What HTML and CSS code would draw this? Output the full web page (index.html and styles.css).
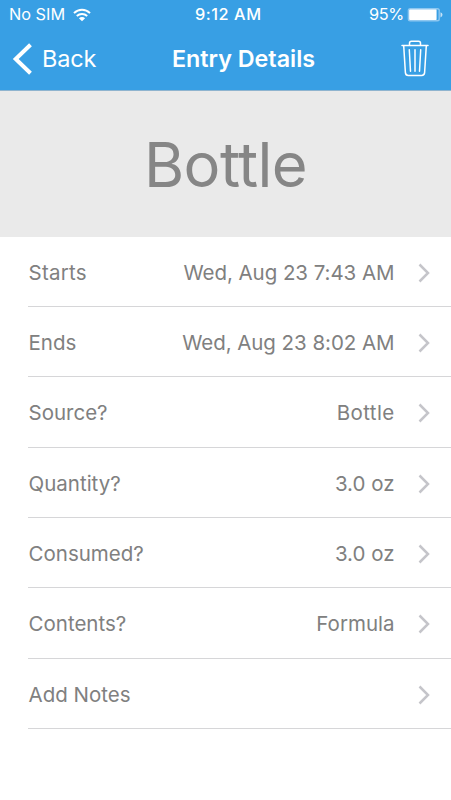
FILE: index.html
```html
<!DOCTYPE html>
<html lang="en">
<head>
<meta charset="utf-8">
<title>Entry Details</title>
<link rel="stylesheet" href="styles.css">
</head>
<body>
<header class="header">
  <div class="status">
    <div class="carrier"><span>No SIM</span>
      <svg width="18" height="14" viewBox="0 0 18 14" fill="none" stroke="#fff" stroke-width="2"><path d="M1 5.1C5.6.7 12.4.7 17 5.1M3.8 8C6.8 5.2 11.2 5.2 14.2 8"/><path d="M5.9 10.2C7.7 8.5 10.3 8.5 12.1 10.2L9 13.3Z" fill="#fff" stroke="none"/></svg>
    </div>
    <span class="clock">9:12 AM</span>
    <div class="power"><span class="percent">95%</span>
      <svg width="36" height="16" viewBox="0 0 36 16"><rect x=".7" y="1" width="32.2" height="13.6" rx="2.5" fill="#8dc7f0"/><rect x="2.2" y="2.5" width="27.5" height="10.6" rx="1" fill="#fff"/><path d="M29.7 2.5h.8q1 0 1 1v8.600q0 1-1 1h-.8z" fill="#389fe4"/><path d="M33.500 5.200q2 .8 2 2.600t-2 2.600z" fill="#c4e2f7"/></svg>
    </div>
  </div>
  <nav class="nav">
    <div class="back">
      <svg width="20" height="32" viewBox="0 0 20 32" fill="none" stroke="#fff" stroke-width="4"><path d="M18.500 1.700L3.700 16L18.500 30.300"/></svg>
      <span>Back</span>
    </div>
    <h1 class="title">Entry Details</h1>
    <svg class="trash" width="28" height="37" viewBox="0 0 28 37" fill="none" stroke="#fff" stroke-width="1.500" stroke-linecap="round" stroke-linejoin="round"><path d="M1 5.500H27M8.500 5.200V3.200Q8.500 1.200 10.500 1.200H17.500Q19.500 1.200 19.500 3.200V5.200M2.700 5.700L4.400 32.600Q4.600 35.400 7.300 35.400H20.700Q23.400 35.400 23.600 32.600L25.300 5.700M8.300 9.700L9.500 31.200M14 9.700V31.200M19.700 9.700L18.500 31.200"/></svg>
  </nav>
</header>
<section class="hero">Bottle</section>
<main class="list">
  <div class="row"><span class="starts">Starts</span><span class="value date">Wed, Aug 23 7:43 AM</span><svg class="chevron" viewBox="0 0 12 20"><path d="M1.500 1.500L10 10L1.500 18.500"/></svg></div>
  <div class="row"><span>Ends</span><span class="value date">Wed, Aug 23 8:02 AM</span><svg class="chevron" viewBox="0 0 12 20"><path d="M1.500 1.500L10 10L1.500 18.500"/></svg></div>
  <div class="row"><span>Source?</span><span class="value source">Bottle</span><svg class="chevron" viewBox="0 0 12 20"><path d="M1.500 1.500L10 10L1.500 18.500"/></svg></div>
  <div class="row"><span>Quantity?</span><span class="value">3.0 oz</span><svg class="chevron" viewBox="0 0 12 20"><path d="M1.500 1.500L10 10L1.500 18.500"/></svg></div>
  <div class="row"><span>Consumed?</span><span class="value">3.0 oz</span><svg class="chevron" viewBox="0 0 12 20"><path d="M1.500 1.500L10 10L1.500 18.500"/></svg></div>
  <div class="row"><span>Contents?</span><span class="value">Formula</span><svg class="chevron" viewBox="0 0 12 20"><path d="M1.500 1.500L10 10L1.500 18.500"/></svg></div>
  <div class="row"><span>Add Notes</span><span class="value"></span><svg class="chevron" viewBox="0 0 12 20"><path d="M1.500 1.500L10 10L1.500 18.500"/></svg></div>
</main>
</body>
</html>
```
FILE: styles.css
```css
* { box-sizing: border-box; }
body { margin: 0; height: 800px; overflow: hidden; background: #fff; color: #808080; font-family: Inter, "Liberation Sans", sans-serif; }
svg { display: block; flex: none; }
span, h1 { white-space: nowrap; }
.header { height: 91px; background: #389fe4; color: #fff; border-bottom: 1px solid #8fb4cf; }
.status { height: 29px; padding: 0 8px 0 9px; display: grid; grid-template-columns: 186px auto 1fr; align-items: center; font-size: 16.300px; line-height: 29px; }
.carrier, .power { display: flex; align-items: center; }
.carrier { gap: 8px; }
.power { justify-content: flex-end; gap: 3px; }
.percent { letter-spacing: -.3px; }
.clock { font-weight: 500; letter-spacing: .55px; }
.nav { height: 61px; padding: 0 22px 2px 12px; display: grid; grid-template-columns: 160px auto 1fr; align-items: center; }
.back { display: flex; align-items: center; gap: 10px; font-size: 23.500px; letter-spacing: -.2px; }
.title { margin: 0; font-size: 23.300px; font-weight: 600; line-height: 30px; }
.trash { justify-self: end; }
.hero { height: 145.600px; padding-top: 1px; background: #eaeaea; display: flex; justify-content: center; align-items: center; color: #868686; font-size: 61.500px; letter-spacing: -.6px; }
.list { padding-left: 28px; }
.row { height: 70.350px; padding: 2.500px 21px 0 .5px; border-bottom: 1.500px solid #d6d6d8; display: flex; align-items: center; font-size: 20.500px; line-height: 28px; }
.starts { letter-spacing: .25px; }
.value { margin-left: auto; }
.date { letter-spacing: -.05px; }
.source { letter-spacing: .35px; }
.chevron { width: 12px; height: 20px; margin-left: 23.500px; fill: none; stroke: #c5c5ca; stroke-width: 2.500; }
```
